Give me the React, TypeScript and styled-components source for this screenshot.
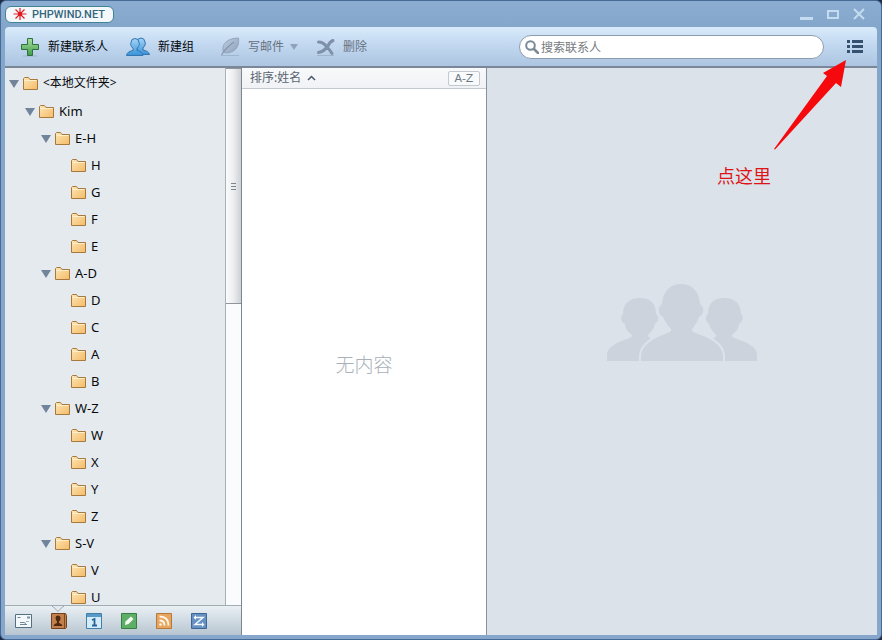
import React from "react";
import styled, { createGlobalStyle, css } from "styled-components";

const GlobalStyle = createGlobalStyle`
  * { box-sizing: border-box; }
  html, body { margin: 0; padding: 0; background: #1d2c40; }
  body, button, input {
    font-family: "Noto Sans", "Noto Sans CJK SC", sans-serif;
    font-size: 12px;
    line-height: 16px;
  }
`;

const plainButton = css`
  appearance: none;
  border: 0;
  margin: 0;
  padding: 0;
  background: none;
  color: inherit;
  cursor: pointer;
  &:disabled { cursor: default; }
`;

const Window = styled.div`
  display: flex;
  flex-direction: column;
  height: 100vh;
  padding: 0 4px 4px;
  border: 1px solid #476b97;
  border-radius: 6px;
  background: linear-gradient(#8badd2, #84a6ca 27px, #86a6cb);
  overflow: hidden;
`;

const TitleBar = styled.header`
  display: flex;
  align-items: center;
  justify-content: space-between;
  flex: none;
  height: 26px;
  padding: 0 12px 0 0;
`;

const Brand = styled.div`
  display: flex;
  align-items: center;
  gap: 5px;
  height: 17px;
  padding: 0 8px 0 7px;
  border: 1px solid #3e8494;
  border-radius: 6px;
  background: #f4f8fb;
  color: #35667b;
  font-family: Roboto, sans-serif;
  font-size: 11px;
  font-weight: 500;
  line-height: 17px;
`;

const WindowControls = styled.div`
  display: flex;
  align-items: center;
  gap: 13px;
`;

const ControlButton = styled.button`
  ${plainButton}
  display: flex;
`;

const Toolbar = styled.div`
  display: flex;
  align-items: center;
  gap: 18px;
  flex: none;
  height: 41px;
  padding: 0 14px 0 15px;
  border-bottom: 2px solid #7a8798;
  border-radius: 4px 4px 0 0;
  background: linear-gradient(#d9ebfb, #c2d8f0 45%, #adc5e1);
`;

const ToolGroup = styled.div`
  display: flex;
  align-items: center;
  gap: 18px;
  margin-right: 8px;
`;

const ToolButton = styled.button`
  ${plainButton}
  display: flex;
  align-items: center;
  gap: 8px;
  white-space: nowrap;
  color: #05080c;
  &:disabled { color: #66717f; }
`;

const WithCaret = styled.span`
  display: flex;
  align-items: center;
  gap: 6px;
`;

const SearchBox = styled.label`
  display: flex;
  align-items: center;
  gap: 2px;
  flex: 0 1 305px;
  min-width: 120px;
  height: 24px;
  margin: 0 5px 0 auto;
  padding: 0 12px 0 5px;
  border: 1px solid #8b9cae;
  border-radius: 12px;
  background: #fff;
`;

const SearchInput = styled.input`
  flex: 1;
  min-width: 0;
  height: 18px;
  border: 0;
  padding: 2px 0 0;
  outline: 0;
  background: transparent;
  color: #333;
  &::placeholder { color: #767a80; opacity: 1; }
`;

const MenuButton = styled.button`
  ${plainButton}
  display: flex;
`;

const Body = styled.div`
  display: grid;
  grid-template-columns: 237px 245px minmax(0, 1fr);
  flex: 1;
  min-height: 0;
`;

const Sidebar = styled.aside`
  display: flex;
  flex-direction: column;
  min-height: 0;
  border-right: 1px solid #7d858d;
  background: #e5eaef;
`;

const TreeArea = styled.div`
  display: flex;
  flex: 1;
  min-height: 0;
`;

const Tree = styled.ul`
  flex: 1;
  min-height: 0;
  margin: 0;
  padding: 0;
  list-style: none;
  overflow: hidden;
`;

const TreeItem = styled.li<{ $level: number }>`
  display: flex;
  align-items: center;
  height: ${(p) => (p.$level === 0 ? 29 : 27)}px;
  padding-left: ${(p) => 4 + p.$level * 16}px;
`;

const TreeToggle = styled.button`
  ${plainButton}
  display: flex;
  width: 14px;
  padding-top: 2px;
`;

const ToggleSpace = styled.span`
  width: 14px;
`;

const FolderButton = styled.button<{ $root: boolean }>`
  ${plainButton}
  display: flex;
  align-items: center;
  gap: 4px;
  color: #080a0c;
  font-size: ${(p) => (p.$root ? 12 : 13)}px;
  line-height: ${(p) => (p.$root ? 20 : 16)}px;
`;

const ScrollTrack = styled.div`
  width: 16px;
  flex: none;
  border-left: 1px solid #a9b0b6;
  background: #f9fbfc;
`;

const ScrollThumb = styled.div`
  display: flex;
  flex-direction: column;
  align-items: center;
  justify-content: center;
  gap: 2px;
  height: 44%;
  border: solid #8f959b;
  border-width: 1px 0;
  background: linear-gradient(90deg, #fafbfc, #eceef0 50%, #cdd0d5);
`;

const Grip = styled.span`
  width: 5px;
  height: 1px;
  background: #7d858e;
`;

const AppBar = styled.nav`
  display: flex;
  align-items: center;
  gap: 18px;
  flex: none;
  height: 30px;
  padding: 0 10px;
  border-top: 1px solid #a2acb4;
  background: linear-gradient(#eaf0f4, #cbd6df 60%, #b8c5d0);
`;

const AppButton = styled.button`
  ${plainButton}
  position: relative;
  display: flex;
  justify-content: center;
  width: 17px;
`;

const Notch = styled.svg`
  position: absolute;
  left: 2px;
  top: -7px;
`;

const ListPane = styled.section`
  display: flex;
  flex-direction: column;
  border-right: 1px solid #89929c;
  background: #fff;
`;

const ListHeader = styled.div`
  display: flex;
  align-items: center;
  justify-content: space-between;
  flex: none;
  height: 21px;
  padding: 0 6px 0 8px;
  border-bottom: 1px solid #c3c9ce;
  background: linear-gradient(#f7f9fb, #f0f2f5);
`;

const SortButton = styled.button`
  ${plainButton}
  display: flex;
  align-items: center;
  gap: 6px;
  color: #59646f;
`;

const RangeButton = styled.button`
  ${plainButton}
  width: 32px;
  height: 15px;
  border: 1px solid #c3c9ce;
  border-radius: 2px;
  background: #f8fafb;
  color: #6c7882;
  font-family: "DejaVu Sans", sans-serif;
  font-size: 11px;
  line-height: 13px;
`;

const EmptyText = styled.p`
  display: flex;
  align-items: center;
  justify-content: center;
  flex: 1;
  margin: 0;
  padding-top: 6px;
  color: #a8b0b8;
  font-size: 19px;
  font-weight: 300;
  line-height: 28px;
`;

const DetailPane = styled.main`
  position: relative;
  display: flex;
  align-items: center;
  justify-content: center;
  padding-bottom: 58px;
  background: #dbe2e9;
`;

const Note = styled.div`
  position: absolute;
  right: 106px;
  top: 96px;
  color: #dd1519;
  font-size: 18px;
  line-height: 24px;
`;

const Arrow = styled.svg`
  position: absolute;
  right: 28px;
  top: -10px;
  pointer-events: none;
`;

const BurstIcon = () => (
  <svg width="14" height="14" viewBox="0 0 14 14" aria-hidden="true">
    <path
      d="M7 1v12M.5 7h13M2.500 2.500l9 9M11.500 2.500l-9 9"
      stroke="#df2029"
      strokeWidth="1.200"
    />
    <circle cx="7" cy="7" r="2.200" fill="#e01820" />
  </svg>
);

const PlusIcon = () => (
  <svg width="20" height="20" viewBox="0 0 20 20" aria-hidden="true">
    <defs>
      <linearGradient id="plus" x2="0" y2="1">
        <stop stopColor="#a8dda0" />
        <stop offset="1" stopColor="#419c48" />
      </linearGradient>
    </defs>
    <path d="M3 19h14" stroke="#8ea6bf" opacity=".6" />
    <path d="M7.500 1.500h5v6h6v5h-6v6h-5v-6h-6v-5h6z" fill="url(#plus)" stroke="#2f7040" strokeLinejoin="round" />
  </svg>
);

const GroupIcon = () => (
  <svg width="24" height="20" viewBox="0 0 24 20" aria-hidden="true">
    <defs>
      <linearGradient id="group" x2="0" y2="1">
        <stop stopColor="#a4d5f6" />
        <stop offset="1" stopColor="#3a92d6" />
      </linearGradient>
    </defs>
    <g fill="url(#group)" stroke="#3275b2" strokeLinejoin="round">
      <path d="M11 5Q11.500 1 15 1T19 5q1 2-.5 4L17 11v2q5.500 1 6.500 4.500H11z" />
      <path d="M5 5.500Q5 1.500 9 1.500T13 5.500q1 2-.5 4L11 11.500v2q5.500 1 6 5H.5Q1 14.500 7 13.500v-2l-1.500-2Q4 7.500 5 5.500z" />
    </g>
  </svg>
);

const FeatherIcon = () => (
  <svg width="20" height="20" viewBox="0 0 20 20" aria-hidden="true">
    <defs>
      <linearGradient id="feather" x2="1" y2="1">
        <stop stopColor="#c0cee0" />
        <stop offset="1" stopColor="#8c9fb9" />
      </linearGradient>
    </defs>
    <path d="M1 18.500h18" stroke="#8b9fb8" opacity=".5" />
    <path d="M3 14C1.500 6 9 1 18.500 1 19.500 8 17 14 8 16l-4-.5z" fill="url(#feather)" stroke="#94a5bd" />
    <path d="M1.500 18Q6 10.500 14 5" fill="none" stroke="#8395af" strokeWidth="1.200" />
  </svg>
);

const DeleteIcon = () => (
  <svg width="19" height="18" viewBox="0 0 19 18" aria-hidden="true">
    <path d="M1 17.500h17" stroke="#8798ad" opacity=".5" />
    <path
      d="M2.500 4Q7 4 10.500 8.500 14 12 16 15.500M17 2.500Q13.500 4 12 8 8 13.500 2.500 14.500"
      fill="none"
      stroke="#7f90a9"
      strokeWidth="3"
      strokeLinecap="round"
    />
  </svg>
);

const DownTriangle = ({ color, width = 10, height = 8 }: { color: string; width?: number; height?: number }) => (
  <svg width={width} height={height} viewBox="0 0 10 8" preserveAspectRatio="none" aria-hidden="true">
    <path d="M0 0h10L5 8z" fill={color} />
  </svg>
);

const SearchIcon = () => (
  <svg width="14" height="14" viewBox="0 0 14 14" aria-hidden="true">
    <circle cx="5.500" cy="5.500" r="4.300" fill="none" stroke="#7b8a97" strokeWidth="2" />
    <path d="M9 9l4 4" stroke="#7b8a97" strokeWidth="2.500" strokeLinecap="round" />
  </svg>
);

const MenuIcon = () => (
  <svg width="16" height="13" viewBox="0 0 16 13" aria-hidden="true">
    <path d="M0 0h3v3H0zM5 0h11v3H5zM0 5h3v3H0zM5 5h11v3H5zM0 10h3v3H0zM5 10h11v3H5z" fill="#36506f" />
  </svg>
);

const FolderIcon = () => (
  <svg width="16" height="16" viewBox="0 0 16 16" aria-hidden="true">
    <defs>
      <linearGradient id="folder" x2="1" y2="1">
        <stop stopColor="#fde6b4" />
        <stop offset="1" stopColor="#f4bb68" />
      </linearGradient>
    </defs>
    <path d="M.5 14.500V3.500l1-1H5.500l1.500 2h7.500v10z" fill="url(#folder)" stroke="#a8793f" />
    <path d="M1.500 5.500h12" stroke="#fff0cb" />
  </svg>
);

const MailIcon = () => (
  <svg width="17" height="14" viewBox="0 0 17 14" aria-hidden="true">
    <path d="M.5.5h16v13H.5z" fill="#f3f8fa" stroke="#536f80" />
    <path d="M2.500 3.500h3M5 8.500h4l2 1M5 10.500h7" fill="none" stroke="#6d8796" />
    <path d="M12 2.500h3v2h-3z" fill="#7893a3" />
    <path d="M11 7.500h3" stroke="#9fb4c1" />
  </svg>
);

const ContactsIcon = () => (
  <svg width="16" height="16" viewBox="0 0 16 16" aria-hidden="true">
    <path d="M.5.5h14l1 2v12l-1 1H.5z" fill="#c3804c" stroke="#71401f" />
    <path d="M13.500 1v14" stroke="#80481f" />
    <path d="M4.500 4.500Q5 2.500 7 2.500t2.500 2-1.500 4v1.500q3 .5 3.500 3h-9q.5-2.500 3.500-3V8.500q-1.500-2-1.500-4z" fill="#4e2810" />
  </svg>
);

const CalendarIcon = () => (
  <svg width="16" height="16" viewBox="0 0 16 16" aria-hidden="true">
    <path d="M.5.5h15v15H.5z" fill="#d4ebfa" stroke="#407fac" />
    <path d="M1 1h14v3H1z" fill="#5799c7" />
    <path d="M6 7l2.500-1V12M6 12.500h5" fill="none" stroke="#276395" strokeWidth="1.800" />
  </svg>
);

const NotesIcon = () => (
  <svg width="16" height="16" viewBox="0 0 16 16" aria-hidden="true">
    <path d="M.5.5h15v15H.5z" fill="#5eae68" stroke="#348042" />
    <path d="M4 12l.5-3.500 5.500-5L12.500 6l-5 5z" fill="#f4fbf3" />
  </svg>
);

const FeedIcon = () => (
  <svg width="16" height="16" viewBox="0 0 16 16" aria-hidden="true">
    <path d="M.5.5h15v15H.5z" fill="#e6a560" stroke="#b87838" />
    <path d="M3.500 7.500q5 0 5 5M3.500 3.500q9 0 9 9" fill="none" stroke="#fff6e5" strokeWidth="1.800" />
    <circle cx="4.500" cy="11.500" r="1.300" fill="#fff6e5" />
  </svg>
);

const SyncIcon = () => (
  <svg width="16" height="16" viewBox="0 0 16 16" aria-hidden="true">
    <path d="M.5.5h15v15H.5z" fill="#6791c3" stroke="#3d6595" />
    <path d="M4 4.500h8l-8 7h8" fill="none" stroke="#f3f8fc" strokeWidth="1.500" />
    <path d="M5 2L2.500 4.500 5 7zM11 9l2.500 2.500L11 14z" fill="#f3f8fc" />
  </svg>
);

const PeopleIllustration = () => (
  <svg width="151" height="77" viewBox="0 0 151 77" aria-hidden="true">
    <defs>
      <path
        id="side-person"
        d="M0 77V71C0 63 9 59 20 55Q26 53 25 51C21 48 18 44 18 40 14 38 13 33 16 30 16 20 22 14 33 14S49 20 49 30C53 33 51 38 48 40 47 44 44 48 41 51Q40 53 46 56V77z"
      />
    </defs>
    <g fill="#ccd3dd">
      <use href="#side-person" />
      <use href="#side-person" transform="translate(150 0) scale(-1 1)" />
      <path
        d="M34 79V71C35 61 47 54 58 50Q65 48 64 45C60 41 58 37 56 33 51 31 50 23 55 20 56 7 63 0 74 0S92 7 93 20C98 23 97 31 92 33 91 37 88 41 85 45Q84 48 91 50C103 54 115 61 116 71V79z"
        stroke="#dbe2e9"
        strokeWidth="4"
        paintOrder="stroke"
      />
    </g>
  </svg>
);

const folders: { name: string; level: number }[] = [
  { name: "<本地文件夹>", level: 0 },
  { name: "Kim", level: 1 },
  { name: "E-H", level: 2 },
  { name: "H", level: 3 },
  { name: "G", level: 3 },
  { name: "F", level: 3 },
  { name: "E", level: 3 },
  { name: "A-D", level: 2 },
  { name: "D", level: 3 },
  { name: "C", level: 3 },
  { name: "A", level: 3 },
  { name: "B", level: 3 },
  { name: "W-Z", level: 2 },
  { name: "W", level: 3 },
  { name: "X", level: 3 },
  { name: "Y", level: 3 },
  { name: "Z", level: 3 },
  { name: "S-V", level: 2 },
  { name: "V", level: 3 },
  { name: "U", level: 3 },
];

const apps = [
  { label: "邮件", Icon: MailIcon },
  { label: "联系人", Icon: ContactsIcon, active: true },
  { label: "日历", Icon: CalendarIcon },
  { label: "便签", Icon: NotesIcon },
  { label: "订阅", Icon: FeedIcon },
  { label: "同步", Icon: SyncIcon },
];

export default function App() {
  return (
    <>
      <GlobalStyle />
      <Window>
        <TitleBar>
          <Brand>
            <BurstIcon />
            PHPWIND.NET
          </Brand>
          <WindowControls>
            <ControlButton aria-label="最小化">
              <svg width="14" height="12" viewBox="0 0 14 12">
                <path d="M0 9h13v3H0z" fill="#c5dbef" />
              </svg>
            </ControlButton>
            <ControlButton aria-label="最大化">
              <svg width="13" height="12" viewBox="0 0 13 12">
                <path d="M1 3h10v7H1z" fill="none" stroke="#c5dbef" strokeWidth="2" />
              </svg>
            </ControlButton>
            <ControlButton aria-label="关闭">
              <svg width="12" height="12" viewBox="0 0 12 12">
                <path d="M1 1l10 10M11 1L1 11" stroke="#c5dbef" strokeWidth="2" />
              </svg>
            </ControlButton>
          </WindowControls>
        </TitleBar>

        <Toolbar>
          <ToolGroup>
            <ToolButton>
              <PlusIcon />
              新建联系人
            </ToolButton>
            <ToolButton>
              <GroupIcon />
              新建组
            </ToolButton>
          </ToolGroup>
          <ToolButton disabled>
            <FeatherIcon />
            <WithCaret>
              写邮件
              <DownTriangle color="#8fa3bd" width={8} height={6} />
            </WithCaret>
          </ToolButton>
          <ToolButton disabled>
            <DeleteIcon />
            删除
          </ToolButton>
          <SearchBox>
            <SearchIcon />
            <SearchInput type="text" placeholder="搜索联系人" aria-label="搜索联系人" />
          </SearchBox>
          <MenuButton aria-label="菜单">
            <MenuIcon />
          </MenuButton>
        </Toolbar>

        <Body>
          <Sidebar>
            <TreeArea>
              <Tree>
                {folders.map(({ name, level }) => (
                  <TreeItem key={name} $level={level}>
                    {level < 3 ? (
                      <TreeToggle aria-label={`折叠 ${name}`} aria-expanded="true">
                        <DownTriangle color="#72849a" />
                      </TreeToggle>
                    ) : (
                      <ToggleSpace />
                    )}
                    <FolderButton $root={level === 0}>
                      <FolderIcon />
                      {name}
                    </FolderButton>
                  </TreeItem>
                ))}
              </Tree>
              <ScrollTrack>
                <ScrollThumb>
                  <Grip />
                  <Grip />
                  <Grip />
                </ScrollThumb>
              </ScrollTrack>
            </TreeArea>
            <AppBar>
              {apps.map(({ label, Icon, active }) => (
                <AppButton key={label} aria-label={label}>
                  {active && (
                    <Notch width="12" height="7" viewBox="0 0 12 7">
                      <path d="M0 0h12v1L6 6 0 1z" fill="#e5eaef" />
                      <path d="M0 .5h1l5 5 5-5h1" fill="none" stroke="#98a3ac" />
                    </Notch>
                  )}
                  <Icon />
                </AppButton>
              ))}
            </AppBar>
          </Sidebar>

          <ListPane>
            <ListHeader>
              <SortButton>
                排序:姓名
                <svg width="9" height="6" viewBox="0 0 9 6" aria-hidden="true">
                  <path d="M1 5l3.500-3.500L8 5" fill="none" stroke="#4b5967" strokeWidth="1.500" />
                </svg>
              </SortButton>
              <RangeButton>A-Z</RangeButton>
            </ListHeader>
            <EmptyText>无内容</EmptyText>
          </ListPane>

          <DetailPane>
            <PeopleIllustration />
            <Note>点这里</Note>
            <Arrow width="76" height="94" viewBox="0 0 76 94" aria-hidden="true">
              <path d="M1 91L54 18 50 15 73 2 68 29 63 25 2 91.500z" fill="#f5090c" />
            </Arrow>
          </DetailPane>
        </Body>
      </Window>
    </>
  );
}
